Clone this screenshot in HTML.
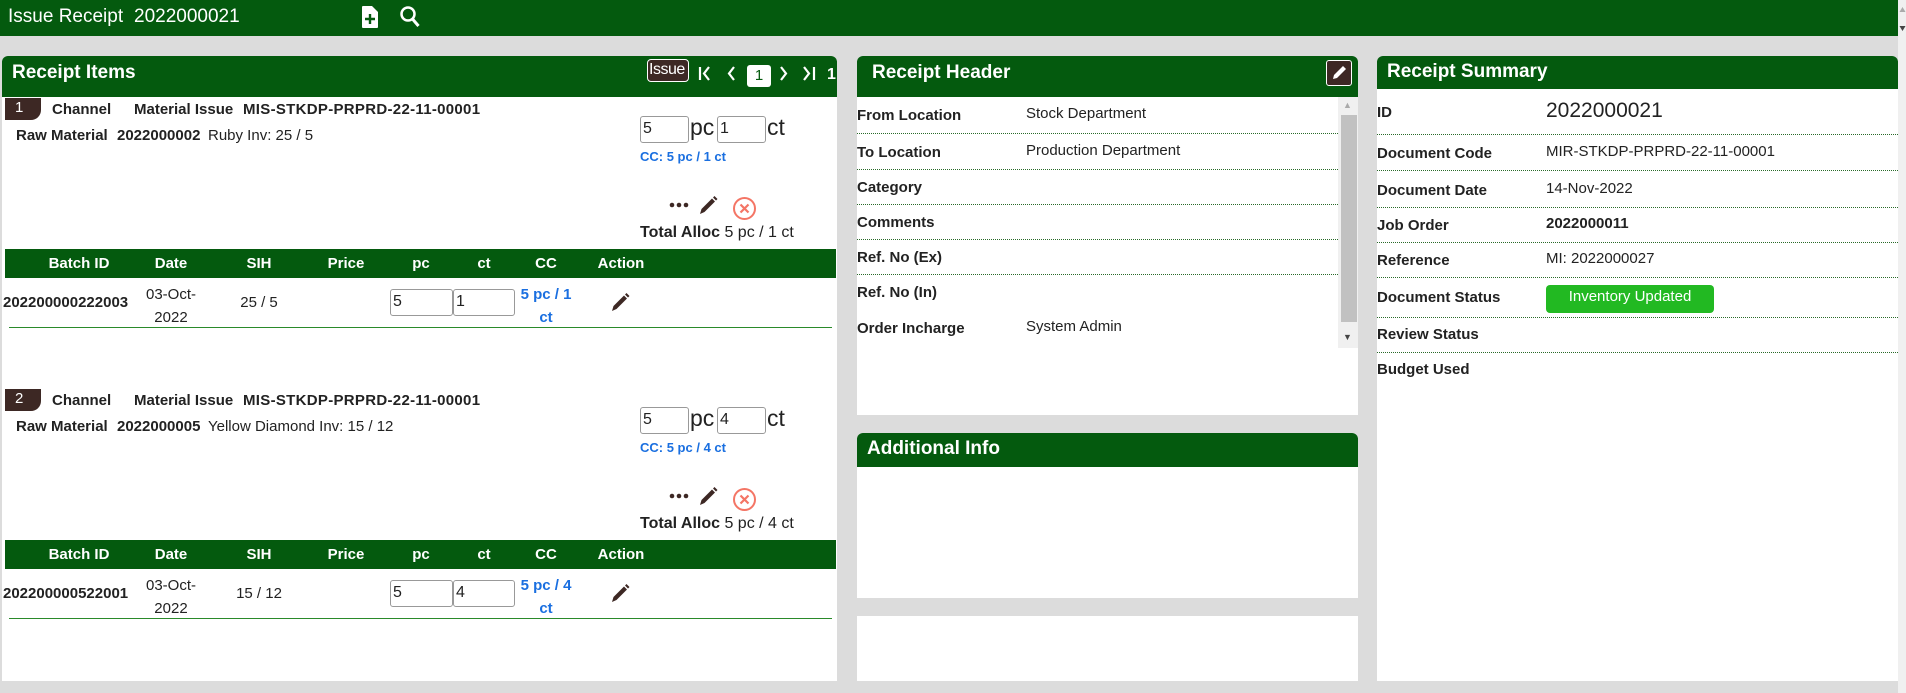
<!DOCTYPE html>
<html><head><meta charset="utf-8"><style>
*{box-sizing:border-box;margin:0;padding:0}
body{width:1906px;height:693px;background:#dcdcdc;font-family:"Liberation Sans",Arial,sans-serif;color:#222;position:relative;overflow:hidden;font-size:15px}
.a{position:absolute;white-space:nowrap}
.g{background:#045a0e}
.panel{position:absolute;background:#fff;border-radius:6px 6px 0 0;overflow:hidden}
.ph{position:absolute;left:0;right:0;top:0;background:#045a0e;color:#fff;font-weight:bold;font-size:19px}
.b{font-weight:bold}
.inp{position:absolute;border:1px solid #999;border-radius:3px;background:#fff;font-size:16px;padding:3px 2px}
.blue{color:#1a6fe0;font-weight:bold}
.th{position:absolute;color:#fff;font-weight:bold;font-size:15px;transform:translateX(-50%)}
.dl{position:absolute;left:0;height:0;border-top:1px dotted #2a6a2a}
</style></head><body>
<div class="a g" style="left:0;top:0;width:1898px;height:36px"></div>
<div class="a" style="left:8px;top:6px;color:#fff;font-size:19px">Issue Receipt</div>
<div class="a" style="left:134px;top:6px;color:#fff;font-size:19px">2022000021</div>
<svg class="a" style="left:361px;top:5px" width="18" height="24" viewBox="0 0 18 24"><path d="M2 1h9l6 6v15a1 1 0 0 1-1 1H2a1 1 0 0 1-1-1V2a1 1 0 0 1 1-1z" fill="#fff"/><path d="M9 9v10M4 14h10" stroke="#045a0e" stroke-width="2.4"/></svg>
<svg class="a" style="left:399px;top:5px" width="22" height="24" viewBox="0 0 22 24"><circle cx="9" cy="9" r="6.5" fill="none" stroke="#fff" stroke-width="2.5"/><path d="M13.5 14l6 7" stroke="#fff" stroke-width="3"/></svg>
<div class="a" style="left:1898px;top:0;width:8px;height:693px;background:#f0f0f0"></div>
<svg class="a" style="left:1899px;top:4px" width="7" height="30" viewBox="0 0 7 30"><path d="M0.5 8L3.5 3 6.5 8z" fill="#aaa"/><path d="M0.5 22L3.5 27 6.5 22z" fill="#444"/></svg>

<div class="panel" style="left:2px;top:56px;width:835px;height:625px">
<div class="ph" style="height:41px;padding:6px 10px">Receipt Items</div>
<div class="a" style="left:645px;top:3px;width:42px;height:23px;background:#3d2824;border:1px solid #fff;border-radius:4px;color:#fff;font-size:16px;padding:1px 1px;letter-spacing:-0.5px">Issue</div>
<svg class="a" style="left:690px;top:0" width="145" height="41" viewBox="0 0 145 41"><g stroke="#fff" stroke-width="2.2" fill="none"><path d="M8 11v13M17 11l-5 6.5 5 6.5"/><path d="M42 11l-5 6.5 5 6.5"/><path d="M89 11l5 6.5-5 6.5"/><path d="M112 11l5 6.5-5 6.5M122 11v13"/></g></svg>
<div class="a" style="left:745px;top:9px;width:24px;height:22px;background:#fff;border-radius:3px;color:#045a0e;text-align:center;font-size:15px;line-height:22px">1</div>
<div class="a" style="left:825px;top:10px;color:#fff;font-size:16px;font-weight:bold">1</div>
</div>
<div id="items"></div>

<div class="panel" style="left:857px;top:56px;width:501px;height:359px">
<div class="ph" style="height:41px;padding:6px 15px">Receipt Header</div>
<div class="a" style="left:469px;top:4px;width:26px;height:26px;background:#3d2824;border:1px solid #fff;border-radius:3px"></div>
<svg class="a" style="left:472px;top:7px" width="20" height="20" viewBox="0 0 20 20"><path d="M4 16l1-4 9-9 3 3-9 9z" fill="#fff"/></svg>
<div class="a" style="left:481px;top:41px;width:20px;height:251px;background:#f0f0f0"></div>
<div class="a" style="left:484px;top:59px;width:16px;height:207px;background:#c1c1c1"></div>
<div class="a" style="left:486px;top:44px;font-size:9px;color:#aaa">▲</div>
<div class="a" style="left:486px;top:276px;font-size:9px;color:#444">▼</div>
</div>
<div class="a b" style="left:857px;top:107px">From Location</div><div class="a" style="left:1026px;top:105px">Stock Department</div>
<div class="dl" style="left:857px;width:481px;top:133px"></div>
<div class="a b" style="left:857px;top:144px">To Location</div><div class="a" style="left:1026px;top:142px">Production Department</div>
<div class="dl" style="left:857px;width:481px;top:169px"></div>
<div class="a b" style="left:857px;top:179px">Category</div>
<div class="dl" style="left:857px;width:481px;top:204px"></div>
<div class="a b" style="left:857px;top:214px">Comments</div>
<div class="dl" style="left:857px;width:481px;top:239px"></div>
<div class="a b" style="left:857px;top:249px">Ref. No (Ex)</div>
<div class="dl" style="left:857px;width:481px;top:274px"></div>
<div class="a b" style="left:857px;top:284px">Ref. No (In)</div>
<div class="a b" style="left:857px;top:320px">Order Incharge</div><div class="a" style="left:1026px;top:318px">System Admin</div>

<div class="panel" style="left:857px;top:433px;width:501px;height:165px">
<div class="ph" style="height:34px;padding:5px 10px">Additional Info</div></div>
<div class="panel" style="left:857px;top:616px;width:501px;height:65px;border-radius:0"></div>

<div class="panel" style="left:1377px;top:56px;width:521px;height:625px">
<div class="ph" style="height:33px;padding:5px 10px">Receipt Summary</div></div>
<div class="a b" style="left:1377px;top:104px">ID</div><div class="a" style="left:1546px;top:99px;font-size:21px">2022000021</div>
<div class="dl" style="left:1377px;width:521px;top:134px"></div>
<div class="a b" style="left:1377px;top:145px">Document Code</div><div class="a" style="left:1546px;top:143px">MIR-STKDP-PRPRD-22-11-00001</div>
<div class="dl" style="left:1377px;width:521px;top:170px"></div>
<div class="a b" style="left:1377px;top:182px">Document Date</div><div class="a" style="left:1546px;top:180px">14-Nov-2022</div>
<div class="dl" style="left:1377px;width:521px;top:207px"></div>
<div class="a b" style="left:1377px;top:217px">Job Order</div><div class="a b" style="left:1546px;top:215px">2022000011</div>
<div class="dl" style="left:1377px;width:521px;top:242px"></div>
<div class="a b" style="left:1377px;top:252px">Reference</div><div class="a" style="left:1546px;top:250px">MI: 2022000027</div>
<div class="dl" style="left:1377px;width:521px;top:277px"></div>
<div class="a b" style="left:1377px;top:289px">Document Status</div>
<div class="a" style="left:1546px;top:285px;width:168px;height:28px;background:#22b922;border-radius:4px;color:#fff;text-align:center;line-height:24px;font-size:15px">Inventory Updated</div>
<div class="dl" style="left:1377px;width:521px;top:317px"></div>
<div class="a b" style="left:1377px;top:326px">Review Status</div>
<div class="dl" style="left:1377px;width:521px;top:352px"></div>
<div class="a b" style="left:1377px;top:361px">Budget Used</div>

<script>
var items=[["2022000002","Ruby Inv: 25 / 5","1","202200000222003","25 / 5"],["2022000005","Yellow Diamond Inv: 15 / 12","4","202200000522001","15 / 12"]];
var h="";
var pen='<svg width="22" height="22" viewBox="0 0 22 22"><path d="M3 20l1.5-5L15 4.5l3 3L7.5 18z M16 3.5l1.5-1.5 3 3L19 6.5z" fill="#3d2824"/></svg>';
items.forEach(function(it,i){var o=i*291,t=function(y){return (y+o)+"px"};
h+='<div class="a" style="left:5px;top:'+t(98)+';width:36px;height:22px;background:#3d2824;border-radius:0 0 10px 0;color:#fff;font-size:15px;padding:1px 0 0 10px">'+(i+1)+'</div>';
h+='<div class="a b" style="left:52px;top:'+t(101)+'">Channel</div><div class="a b" style="left:134px;top:'+t(101)+'">Material Issue</div><div class="a b" style="left:243px;top:'+t(101)+';letter-spacing:0.3px">MIS-STKDP-PRPRD-22-11-00001</div>';
h+='<div class="a b" style="left:16px;top:'+t(127)+'">Raw Material</div><div class="a b" style="left:117px;top:'+t(127)+'">'+it[0]+'</div><div class="a" style="left:208px;top:'+t(127)+'">'+it[1]+'</div>';
h+='<div class="inp" style="left:640px;top:'+t(116)+';width:49px;height:27px">5</div><div class="a" style="left:690px;top:'+t(114)+';font-size:23px">pc</div>';
h+='<div class="inp" style="left:717px;top:'+t(116)+';width:49px;height:27px">'+it[2]+'</div><div class="a" style="left:767px;top:'+t(114)+';font-size:23px">ct</div>';
h+='<div class="a blue" style="left:640px;top:'+t(149)+';font-size:13px">CC: 5 pc / '+it[2]+' ct</div>';
h+='<svg class="a" style="left:669px;top:'+t(202)+'" width="20" height="6" viewBox="0 0 20 6"><circle cx="3" cy="3" r="2.3" fill="#3d2824"/><circle cx="10" cy="3" r="2.3" fill="#3d2824"/><circle cx="17" cy="3" r="2.3" fill="#3d2824"/></svg>';
h+='<div class="a" style="left:697px;top:'+t(194)+'">'+pen+'</div>';
h+='<svg class="a" style="left:732px;top:'+t(196)+'" width="25" height="25" viewBox="0 0 25 25"><circle cx="12.5" cy="12.5" r="10.5" fill="none" stroke="#f47565" stroke-width="2"/><path d="M8.5 8.5l8 8M16.5 8.5l-8 8" stroke="#f47565" stroke-width="2.2"/></svg>';
h+='<div class="a" style="left:640px;top:'+t(224)+';font-size:16px"><b>Total Alloc</b> 5 pc / '+it[2]+' ct</div>';
h+='<div class="a g" style="left:5px;top:'+t(249)+';width:831px;height:29px"></div>';
[["Batch ID",79],["Date",171],["SIH",259],["Price",346],["pc",421],["ct",484],["CC",546],["Action",621]].forEach(function(c){h+='<div class="th" style="left:'+c[1]+'px;top:'+t(255)+'">'+c[0]+'</div>'});
h+='<div class="a b" style="left:3px;top:'+t(294)+'">'+it[3]+'</div>';
h+='<div class="a" style="left:171px;top:'+t(283)+';transform:translateX(-50%);text-align:center;line-height:23px">03-Oct-<br>2022</div>';
h+='<div class="a" style="left:259px;top:'+t(294)+';transform:translateX(-50%)">'+it[4]+'</div>';
h+='<div class="inp" style="left:390px;top:'+t(289)+';width:63px;height:27px">5</div><div class="inp" style="left:453px;top:'+t(289)+';width:62px;height:27px">'+it[2]+'</div>';
h+='<div class="a blue" style="left:546px;top:'+t(283)+';transform:translateX(-50%);text-align:center;line-height:23px">5 pc / '+it[2]+'<br>ct</div>';
h+='<div class="a" style="left:609px;top:'+t(291)+'">'+pen+'</div>';
h+='<div class="a" style="left:9px;top:'+t(327)+';width:823px;height:1px;background:#2a8a2a"></div>';
});
document.getElementById("items").outerHTML=h;
</script>
</body></html>
